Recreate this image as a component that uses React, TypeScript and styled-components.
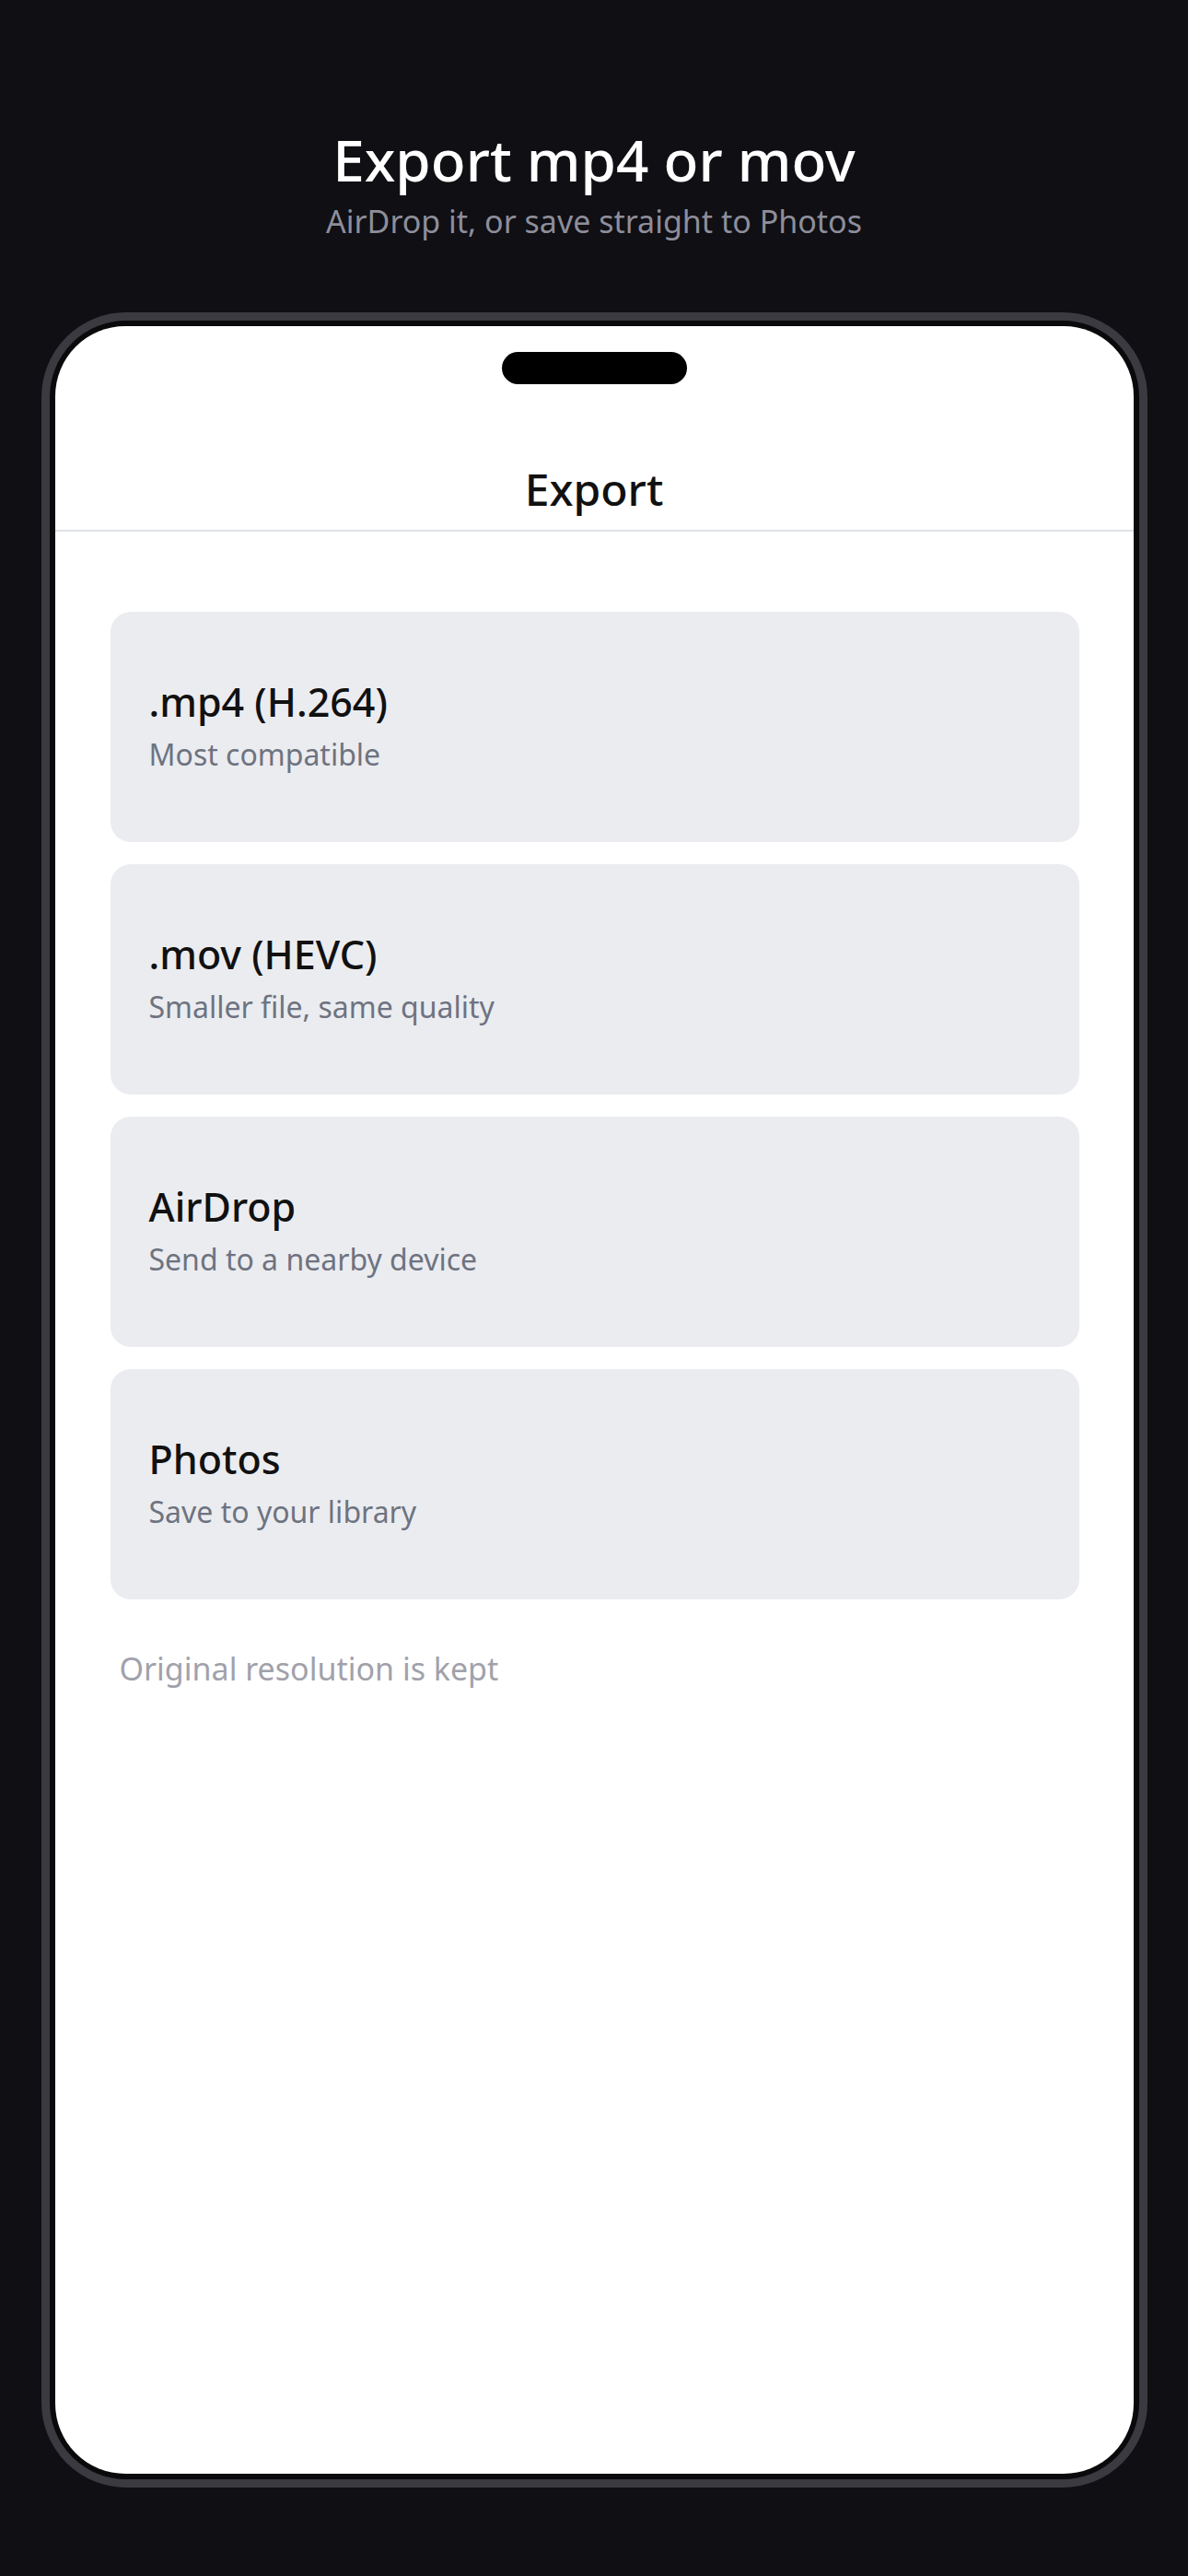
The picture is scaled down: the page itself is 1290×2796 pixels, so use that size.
import React from "react";
import styled, { createGlobalStyle } from "styled-components";

const options = [
  { title: ".mp4 (H.264)", sub: "Most compatible" },
  { title: ".mov (HEVC)", sub: "Smaller file, same quality" },
  { title: "AirDrop", sub: "Send to a nearby device" },
  { title: "Photos", sub: "Save to your library" },
];

const App = () => {
  return (
    <Page>
      <GlobalStyle />
      <Header>
        <Title>Export mp4 or mov</Title>
        <Subtitle>AirDrop it, or save straight to Photos</Subtitle>
      </Header>
      <Phone>
        <Screen>
          <Island />
          <NavBar>
            <NavTitle>Export</NavTitle>
          </NavBar>
          <List>
            {options.map((o) => (
              <OptionCard key={o.title}>
                <OptionTitle>{o.title}</OptionTitle>
                <OptionSub>{o.sub}</OptionSub>
              </OptionCard>
            ))}
          </List>
          <Note>Original resolution is kept</Note>
        </Screen>
      </Phone>
    </Page>
  );
};

export default App;

const GlobalStyle = createGlobalStyle`
  html, body {
    margin: 0;
    padding: 0;
    background: #0f0f14;
  }
  body {
    font-family: "Noto Sans", "Open Sans", sans-serif;
  }
`;

const Page = styled.div`
  width: 1290px;
  height: 2796px;
  background: #0f0f14;
  display: flex;
  flex-direction: column;
  align-items: center;
  overflow: hidden;
`;

const Header = styled.div`
  padding-top: 137px;
  display: flex;
  flex-direction: column;
  align-items: center;
  gap: 11px;
`;

const Title = styled.div`
  font-size: 62px;
  line-height: 72px;
  font-weight: 540;
  color: #ffffff;
`;

const Subtitle = styled.div`
  font-size: 34px;
  line-height: 41px;
  color: #8e8e9a;
`;

const Phone = styled.div`
  margin-top: 78px;
  width: 1201px;
  height: 2361px;
  box-sizing: border-box;
  border: 9px solid #3a3a40;
  border-radius: 92px;
  background: #0a0a0c;
  padding: 6px;
  display: flex;
`;

const Screen = styled.div`
  flex: 1;
  background: #ffffff;
  border-radius: 76px;
  overflow: hidden;
  display: flex;
  flex-direction: column;
`;

const Island = styled.div`
  align-self: center;
  margin-top: 28px;
  width: 201px;
  height: 35px;
  border-radius: 18px;
  background: #000000;
`;

const NavBar = styled.div`
  margin-top: 85px;
  padding-bottom: 15px;
  border-bottom: 2px solid #dfe2e7;
  display: flex;
  justify-content: center;
`;

const NavTitle = styled.div`
  font-size: 48px;
  line-height: 58px;
  font-weight: 540;
  color: #111111;
`;

const List = styled.div`
  margin-top: 87px;
  padding: 0 59px 0 60px;
  display: flex;
  flex-direction: column;
  gap: 24px;
`;

const OptionCard = styled.div`
  height: 250px;
  box-sizing: border-box;
  padding: 0 42px 4px;
  border-radius: 22px;
  background: #ebecf0;
  display: flex;
  flex-direction: column;
  justify-content: center;
  gap: 13px;
`;

const OptionTitle = styled.div`
  font-size: 43px;
  line-height: 50px;
  font-weight: 540;
  color: #111111;
`;

const OptionSub = styled.div`
  font-size: 32px;
  line-height: 38px;
  color: #6e7380;
`;

const Note = styled.div`
  margin-top: 55px;
  padding: 0 70px;
  font-size: 34px;
  line-height: 40px;
  color: #a1a1ab;
`;
